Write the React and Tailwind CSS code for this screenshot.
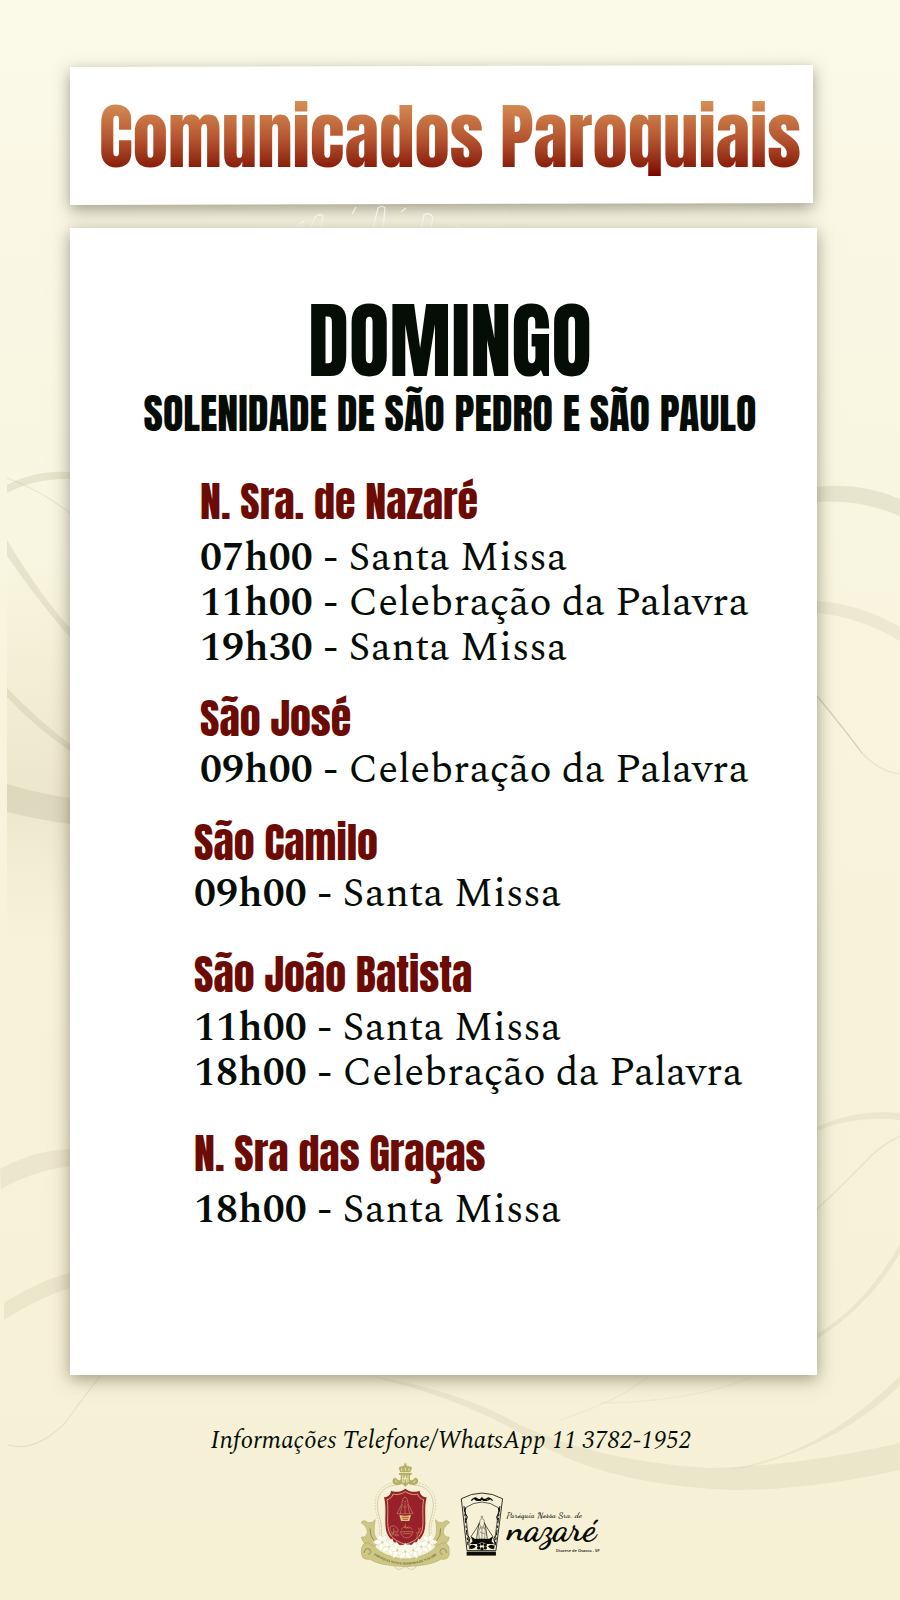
const schedule = [
  {
    church: "N. Sra. de Nazaré",
    spacing: "mt-10 gap-[10px]",
    indent: "pl-[130px]",
    masses: [
      ["07h00", "Santa Missa"],
      ["11h00", "Celebração da Palavra"],
      ["19h30", "Santa Missa"],
    ],
  },
  {
    church: "São José",
    spacing: "mt-6 gap-[5px]",
    indent: "pl-[130px]",
    masses: [["09h00", "Celebração da Palavra"]],
  },
  {
    church: "São Camilo",
    spacing: "mt-[26px] gap-[5px]",
    indent: "pl-[124px]",
    masses: [["09h00", "Santa Missa"]],
  },
  {
    church: "São João Batista",
    spacing: "mt-[34px] gap-[7px]",
    indent: "pl-[124px]",
    masses: [
      ["11h00", "Santa Missa"],
      ["18h00", "Celebração da Palavra"],
    ],
  },
  {
    church: "N. Sra das Graças",
    spacing: "mt-[34px] gap-[10px]",
    indent: "pl-[124px]",
    masses: [["18h00", "Santa Missa"]],
  },
];

function Swirls() {
  return (
    <svg
      className="absolute inset-0 -z-10 h-full w-full"
      viewBox="0 0 900 1600"
      preserveAspectRatio="none"
      aria-hidden="true"
    >
      <defs>
        <linearGradient id="panel" x1="0" y1="0" x2="0" y2="1">
          <stop offset="0" stopColor="#d8d3ad" stopOpacity="0" />
          <stop offset="0.62" stopColor="#d0c9a8" stopOpacity="0.3" />
          <stop offset="1" stopColor="#d8d3ad" stopOpacity="0" />
        </linearGradient>
      </defs>
      <rect x="7" y="560" width="70" height="380" fill="url(#panel)" />
      <g fill="#8f8d6c" fillOpacity="0.16">
        <path d="M7 485Q35 470 70 472V479Q35 478 7 493Z" />
        <path d="M7 540V556Q45 610 70 637V628Q40 595 7 540Z" />
        <path d="M7 688Q40 722 70 744V751Q35 727 7 697Z" />
        <path d="M7 784Q40 794 70 798V824Q40 820 7 812Z" />
        <path d="M817 487Q860 482 900 499V516Q860 499 817 502Z" />
      </g>
      <g fill="#9a9270" fillOpacity="0.12">
        <path d="M817 601Q860 604 900 627V641Q860 617 817 613Z" />
        <path d="M0 1169Q35 1150 70 1149V1166Q30 1172 1 1189Z" />
        <path d="M4 1303Q40 1280 70 1273V1288Q40 1297 4 1320Z" />
        <path d="M817 1127Q855 1109 900 1113V1120Q855 1115 817 1131Z" />
        <path d="M900 1244Q865 1305 817 1334V1339Q870 1305 900 1253Z" />
        <path d="M900 1376Q820 1455 730 1469L745 1468Q840 1445 900 1385Z" />
        <path d="M370 1376Q460 1390 520 1425Q600 1462 710 1468Q800 1466 900 1443V1470Q810 1490 735 1490Q620 1486 550 1450Q470 1400 370 1376Z" />
      </g>
      <g fill="none" stroke="#8f8d6c" strokeOpacity="0.16" strokeWidth="1.2">
        <path d="M7 478Q40 490 70 513" />
        <path d="M817 696Q845 730 862 753" strokeOpacity="0.35" />
        <path d="M862 753Q880 772 900 774" />
        <path d="M100 1376Q78 1405 65 1423Q35 1453 8 1445" />
        <path d="M817 1209Q840 1188 872 1155Q885 1143 900 1136" />
        <path d="M648 1377Q620 1400 560 1420" strokeOpacity="0.08" />
        <path d="M750 1378Q690 1402 600 1403" strokeOpacity="0.08" />
      </g>
    </svg>
  );
}

function Scribble() {
  return (
    <svg className="ml-[224px] h-6 w-[180px]" viewBox="0 0 180 24" aria-hidden="true">
      <g fill="none" stroke="#ffffff" strokeOpacity="0.75" strokeWidth="1.2">
        <path d="M2 24Q6 18 10 17L6 24" />
        <path d="M17 24L21 13Q27 9 29 12L27 24" />
        <path d="M58 10L62 3" />
        <path d="M79 24L84 4Q88 1 91 4L89 24" />
        <path d="M107 8L112 4" />
        <path d="M127 24L130 11Q135 8 139 13L137 24" />
        <path d="M160 24L164 22L168 24" />
      </g>
    </svg>
  );
}

function Lily({ x, y, r }) {
  return (
    <g transform={`translate(${x} ${y}) rotate(${r}) scale(1.25)`}>
      <g fill="#fffef6" stroke="#dcd7ae" strokeWidth="0.8">
        <path d="M0 0Q-13 -8 0 -21Q13 -8 0 0Z" />
        <path d="M0 0Q3 -15 19 -10Q14 6 0 0Z" />
        <path d="M0 0Q15 2 13 17Q-4 14 0 0Z" />
        <path d="M0 0Q4 14 -13 17Q-15 2 0 0Z" />
        <path d="M0 0Q-14 6 -19 -10Q-3 -15 0 0Z" />
      </g>
      <circle r="2.5" fill="#d6cf7d" />
    </g>
  );
}

function Crest() {
  return (
    <svg className="h-[108px] w-[90px] shrink-0" viewBox="30 26 270 324" role="img" aria-label="Brasão da paróquia">
      <g fill="none" stroke="#cfc8a4" strokeWidth="2.5">
        <path d="M142 92C104 92 82 118 82 152C82 186 102 204 92 256" />
        <path d="M190 92C228 92 250 118 250 152C250 186 230 204 240 256" />
        <path d="M142 84C98 86 74 114 75 152C76 186 96 206 86 252" strokeDasharray="5 4" />
        <path d="M190 84C234 86 258 114 257 152C256 186 236 206 246 252" strokeDasharray="5 4" />
        <path d="M132 332Q140 354 160 340Q166 332 172 340Q192 354 200 332" />
      </g>
      <g fill="#b5b065">
        <path d="M146 42Q148 34 158 36Q166 30 174 36Q184 34 186 42L181 54H151Z" />
        <path d="M163 27H169V37H163Z" />
        <path d="M147 56H185V62H180L180 76Q187 80 190 75Q196 66 203 74Q208 86 196 91Q184 94 176 88L166 97L156 88Q148 94 136 91Q124 86 129 74Q136 66 142 75Q145 80 152 76V62H147Z" />
      </g>
      <path
        d="M155 42V50M166 40V50M177 42V50M158 63V84M174 63V84M158 73H174M166 64L161 87M166 64L171 87M142 84L135 79M190 84L197 79"
        fill="none"
        stroke="#f1edcb"
        strokeWidth="2.5"
      />
      <path
        d="M166 103C150 115 134 114 123 109C123 120 114 128 102 129C108 150 106 170 106 205C106 246 124 266 166 278C208 266 226 246 226 205C226 170 224 150 230 129C218 128 209 120 209 109C198 114 182 115 166 103Z"
        fill="#98202b"
      />
      <path
        d="M166 112C152 121 138 122 129 119C127 128 120 134 111 136C115 156 113 172 113 205C113 240 128 259 166 270C204 259 219 240 219 205C219 172 217 156 221 136C212 134 205 128 203 119C194 122 180 121 166 112Z"
        fill="none"
        stroke="#dcc286"
        strokeWidth="2.5"
      />
      <g fill="none" stroke="#c58a64" strokeWidth="2">
        <path d="M165 128C156 130 158 142 155 150L141 178H189L175 150C172 142 174 130 165 128ZM157 150L151 178M173 150L179 178M161 140Q165 146 169 140M165 146V178M160 158H170" />
        <path d="M120 218Q132 210 140 220Q148 226 142 234Q134 228 128 236Q118 232 120 218ZM118 240Q124 232 130 240Q124 248 118 240ZM134 242Q140 234 146 242Q140 248 134 242ZM131 222V240" />
        <path d="M151 232Q154 246 164 250H176Q186 246 189 232ZM154 226Q160 214 170 222Q178 212 187 226M158 238H183M162 216L178 222M166 209V219" />
        <path d="M200 251Q203 233 213 220M203 240L198 233M205 234L213 233M208 228L205 220" />
      </g>
      <path d="M148 181Q165 187 183 181L178 200H153Z" fill="#e2c276" />
      <path d="M156 189H176M158 195H174" stroke="#98202b" strokeWidth="2" />
      <g fill="#cdc684" stroke="#a09b56" strokeWidth="1.2">
        <path d="M33 205Q38 196 47 200Q60 212 76 196Q72 216 73 228Q71 247 88 262L66 286Q36 268 34 248Q50 250 52 232Q50 215 33 205Z" />
        <path d="M299 205Q294 196 285 200Q272 212 256 196Q260 216 259 228Q261 247 244 262L266 286Q296 268 298 248Q282 250 280 232Q282 215 299 205Z" />
        <path d="M34 292Q34 262 56 266Q74 274 88 290Q122 312 166 314Q210 312 244 290Q258 274 276 266Q298 262 298 292Q300 318 272 315Q248 334 166 337Q84 334 60 315Q32 318 34 292Z" />
      </g>
      <path
        d="M60 222Q58 244 74 262M272 222Q274 244 258 262M42 296Q46 276 60 286Q66 298 54 300M290 296Q286 276 272 286Q266 298 278 300"
        fill="none"
        stroke="#8b8747"
        strokeWidth="2.5"
      />
      <Lily x={96} y={264} r={-25} />
      <Lily x={236} y={264} r={25} />
      <Lily x={118} y={278} r={20} />
      <Lily x={214} y={278} r={-20} />
      <Lily x={190} y={288} r={12} />
      <Lily x={142} y={288} r={-8} />
      <Lily x={166} y={292} r={0} />
      <path id="ribbon" d="M56 292Q108 330 166 331Q224 330 276 292" fill="none" />
      <text fontFamily="'Liberation Serif', serif" fontSize="10" fontWeight="700" fill="#6d6a34" textAnchor="middle">
        <textPath href="#ribbon" startOffset="50%">
          PARÓQUIA NOSSA SENHORA DE NAZARÉ
        </textPath>
      </text>
    </svg>
  );
}

function NazareLogo() {
  return (
    <svg className="mt-[14px] h-16 w-[141px] shrink-0" viewBox="360 220 424 192" role="img" aria-label="Paróquia Nossa Sra. de Nazaré">
      <g fill="none" stroke="#0b0b08">
        <path d="M381 396L364 240Q426 206 488 240L468 396Z" strokeWidth="2.5" />
        <path d="M389 392L375 268Q426 232 477 268L461 392" strokeWidth="2" />
        <path d="M372 262L384 380M480 262L466 380" strokeWidth="3" strokeDasharray="16 7 8 5" />
        <path d="M378 268Q370 276 377 286Q386 294 379 304M475 268Q482 276 475 286Q466 294 473 304M383 350Q394 358 387 372M468 350Q457 358 464 372" strokeWidth="3" />
        <path d="M394 246Q404 232 414 242Q424 250 426 236Q428 250 438 242Q448 232 458 246M404 240Q414 250 424 240M430 240Q438 250 450 240" strokeWidth="4" />
        <path d="M420 312Q408 332 393 354M432 312Q444 332 459 354M418 312Q412 340 410 360M434 312Q440 340 442 360" strokeWidth="2" />
        <path d="M421 303Q426 296 432 303L434 314L430 322L436 334L434 362H418L416 338L422 324L418 314ZM420 328H434M420 340L434 346M426 322V360" stroke="#66665a" strokeWidth="2" />
        <path d="M426 291V299M422 295H430" stroke="#66665a" strokeWidth="2" />
      </g>
      <path d="M392 352L404 360H448L460 352L455 368L462 376H440L426 370L412 376H390L398 368Z" fill="#0b0b08" />
      <g fill="#0b0b08">
        <circle cx="416" cy="379" r="5" />
        <circle cx="426" cy="376" r="5" />
        <circle cx="436" cy="379" r="5" />
        <circle cx="416" cy="388" r="5" />
        <circle cx="426" cy="391" r="5" />
        <circle cx="436" cy="388" r="5" />
        <path d="M389 382Q400 374 408 384Q400 394 389 390ZM463 382Q452 374 444 384Q452 394 463 390Z" />
        <path d="M380 399H468V411H380Z" />
      </g>
      <text x="500" y="299" fontFamily="'Dancing Script', cursive" fontSize="27" fontWeight="500" fill="#0b0b08">
        Paróquia Nossa Sra. de
      </text>
      <text x="503" y="364" fontFamily="'Dancing Script', cursive" fontSize="111" fontWeight="700" fill="#0b0b08">
        nazaré
      </text>
      <text x="780" y="399" textAnchor="end" fontFamily="'Open Sans', sans-serif" fontSize="12" fontWeight="600" fill="#0b0b08">
        Diocese de Osasco - SP
      </text>
    </svg>
  );
}

export default function App() {
  return (
    <div className="relative isolate flex min-h-screen flex-col overflow-hidden bg-linear-to-b from-[#fbf9e8] via-[#f7f3dc] to-[#f6f1d5] pt-[66px] pr-[83px] pb-[26px] pl-[70px] font-['Spectral','Liberation_Serif',serif] text-[#060d07]">
      <Swirls />

      <header className="relative mr-1 pt-[31px] pr-3 pb-6 pl-[29px]">
        <div className="absolute inset-0 -z-10 -skew-y-[0.15deg] bg-white shadow-[0_5px_16px_rgba(70,68,45,0.5)]" />
        <h1 className="bg-linear-to-b from-[#d59055] from-5% via-[#b65530] via-50% to-[#7b0000] to-95% bg-clip-text pb-[3px] font-['Anton','Roboto_Condensed',sans-serif] text-[71px] leading-[80px] whitespace-nowrap text-transparent">
          Comunicados Paroquiais
        </h1>
      </header>

      <Scribble />

      <main className="bg-white pt-[69px] pb-[142px] shadow-[0_4px_16px_rgba(70,68,45,0.5)]">
        <div className="pl-[13px] text-center font-['Anton','Roboto_Condensed',sans-serif]">
          <h2 className="text-[83px] leading-[88px]">DOMINGO</h2>
          <p className="mt-[5px] text-[42px] leading-[48px]">SOLENIDADE DE SÃO PEDRO E SÃO PAULO</p>
        </div>

        {schedule.map(({ church, spacing, indent, masses }) => (
          <section key={church} className={`flex flex-col ${spacing} ${indent}`}>
            <h3 className="font-['Anton','Roboto_Condensed',sans-serif] text-[42px] leading-[48px] text-[#6b0b04]">
              {church}
            </h3>
            <ul className="text-[41px] leading-[45px] whitespace-nowrap">
              {masses.map(([time, name]) => (
                <li key={time}>
                  <strong className="font-semibold">{time}</strong> - {name}
                </li>
              ))}
            </ul>
          </section>
        ))}
      </main>

      <footer className="mt-[50px] flex flex-col items-center gap-[6px] pl-[15px]">
        <p className="text-[25px] leading-8 italic">Informações Telefone/WhatsApp 11 3782-1952</p>
        <div className="flex items-center gap-[10px] pl-[58px]">
          <Crest />
          <NazareLogo />
        </div>
      </footer>
    </div>
  );
}
